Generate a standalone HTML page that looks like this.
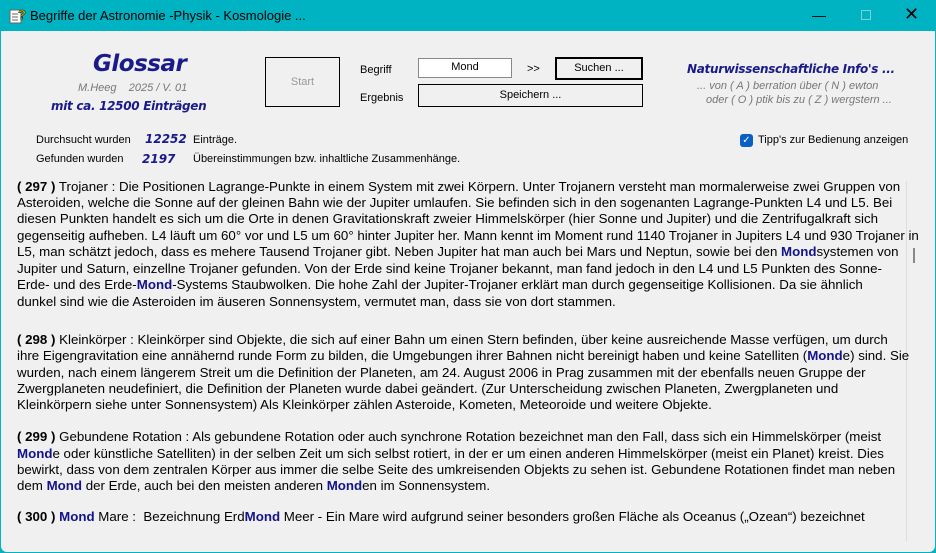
<!DOCTYPE html>
<html><head><meta charset="utf-8"><style>
*{margin:0;padding:0;box-sizing:border-box}
body{width:936px;height:553px;overflow:hidden;background:#00b3c3;font-family:"Liberation Sans",Arial,sans-serif;position:relative}
.win{position:absolute;left:1px;top:31px;width:934px;height:521px;background:#f0f0f0;border-radius:0 0 6px 6px}
.a{position:absolute;white-space:nowrap}
.title{position:absolute;left:30px;top:8px;font-size:13px;color:#000}
.s{font-size:11px;color:#000}
.box{position:absolute;border:1px solid #000}
.t{position:absolute;left:16px;font-size:13.3px;color:#000;white-space:nowrap}
.t b{font-weight:bold}
.m{color:#13138a;font-weight:bold}
.sc{font-family:"DejaVu Sans",sans-serif;font-style:italic;color:#1a1a8a}
</style></head><body>
<svg style="position:absolute;left:9px;top:7px" width="17" height="17" viewBox="0 0 17 17"><rect x="1" y="3" width="11" height="13" fill="#fff" stroke="#666"/><line x1="3" y1="7" x2="9" y2="7" stroke="#666"/><line x1="3" y1="10" x2="9" y2="10" stroke="#666"/><line x1="3" y1="13" x2="9" y2="13" stroke="#666"/><text x="9" y="12" font-size="13" font-weight="bold" fill="#e8c000" stroke="#000" stroke-width=".5" font-family="Liberation Sans">?</text></svg>
<div class="title">Begriffe der Astronomie -Physik - Kosmologie ...</div>
<div class="a" style="left:812px;top:7px;font-size:14px;color:#000">—</div>
<div style="position:absolute;left:861px;top:10px;width:10px;height:10px;border:1px solid #7fcfd8"></div>
<div class="a" style="left:904px;top:4px;font-size:18px;color:#000">✕</div>
<div class="win">
<div class="a sc" style="left:92px;top:20px;font-size:23px;font-weight:bold;letter-spacing:-0.5px">Glossar</div>
<div class="a" style="left:77px;top:51px;font-size:11px;color:#777;font-style:italic">M.Heeg &nbsp;&nbsp; 2025 / V. 01</div>
<div class="a sc" style="left:50px;top:68px;font-size:12px;font-weight:bold;letter-spacing:-0.3px">mit ca. 12500 Einträgen</div>
<div class="a s" style="left:35px;top:103px">Durchsucht wurden</div>
<div class="a sc" style="left:144px;top:101px;font-size:12px;font-weight:bold">12252</div>
<div class="a s" style="left:192px;top:103px">Einträge.</div>
<div class="a s" style="left:35px;top:122px">Gefunden wurden</div>
<div class="a sc" style="left:141px;top:121px;font-size:12px;font-weight:bold">2197</div>
<div class="a s" style="left:192px;top:122px">Übereinstimmungen bzw. inhaltliche Zusammenhänge.</div>
<div class="box" style="left:264px;top:26px;width:75px;height:50px;text-align:center;line-height:48px;font-size:11px;color:#999">Start</div>
<div class="a s" style="left:359px;top:33px">Begriff</div>
<div class="a s" style="left:359px;top:61px">Ergebnis</div>
<div class="box" style="left:417px;top:27px;width:94px;height:20px;background:#fff;border-color:#888;text-align:center;font-size:11px;line-height:16px">Mond</div>
<div class="a s" style="left:526px;top:32px">&gt;&gt;</div>
<div class="box" style="left:554px;top:26px;width:88px;height:23px;border-width:2px;text-align:center;font-size:11px;line-height:19px">Suchen ...</div>
<div class="box" style="left:417px;top:53px;width:225px;height:23px;text-align:center;font-size:11px;line-height:21px">Speichern ...</div>
<div class="a sc" style="left:686px;top:31px;font-size:12px;font-weight:bold;letter-spacing:-0.3px">Naturwissenschaftliche Info's ...</div>
<div class="a" style="left:696px;top:49px;font-size:11px;color:#777;font-style:italic">... von ( A ) berration über ( N ) ewton</div>
<div class="a" style="left:705px;top:63px;font-size:11px;color:#777;font-style:italic">oder ( O ) ptik bis zu ( Z ) wergstern ...</div>
<div style="position:absolute;left:739px;top:103px;width:13px;height:13px;background:#0a5fc4;border-radius:3px;color:#fff;font-size:10px;line-height:13px;text-align:center">✓</div>
<div class="a s" style="left:757px;top:103px">Tipp's zur Bedienung anzeigen</div>
<div style="position:absolute;left:905px;top:150px;width:1px;height:360px;background:#ddd"></div>
<div style="position:absolute;left:912px;top:217px;width:2px;height:15px;background:#888"></div>
<div class="t" style="top:148px"><b>( 297 )</b> Trojaner : Die Positionen Lagrange-Punkte in einem System mit zwei Körpern. Unter Trojanern versteht man mormalerweise zwei Gruppen von</div>
<div class="t" style="top:164px">Asteroiden, welche die Sonne auf der gleinen Bahn wie der Jupiter umlaufen. Sie befinden sich in den sogenanten Lagrange-Punkten L4 und L5. Bei</div>
<div class="t" style="top:180px">diesen Punkten handelt es sich um die Orte in denen Gravitationskraft zweier Himmelskörper (hier Sonne und Jupiter) und die Zentrifugalkraft sich</div>
<div class="t" style="top:197px">gegenseitig aufheben. L4 läuft um 60° vor und L5 um 60° hinter Jupiter her. Mann kennt im Moment rund 1140 Trojaner in Jupiters L4 und 930 Trojaner in</div>
<div class="t" style="top:213px">L5, man schätzt jedoch, dass es mehere Tausend Trojaner gibt. Neben Jupiter hat man auch bei Mars und Neptun, sowie bei den <span class="m">Mond</span>systemen von</div>
<div class="t" style="top:230px">Jupiter und Saturn, einzellne Trojaner gefunden. Von der Erde sind keine Trojaner bekannt, man fand jedoch in den L4 und L5 Punkten des Sonne-</div>
<div class="t" style="top:246px">Erde- und des Erde-<span class="m">Mond</span>-Systems Staubwolken. Die hohe Zahl der Jupiter-Trojaner erklärt man durch gegenseitige Kollisionen. Da sie ähnlich</div>
<div class="t" style="top:263px">dunkel sind wie die Asteroiden im äuseren Sonnensystem, vermutet man, dass sie von dort stammen.</div>
<div class="t" style="top:301px"><b>( 298 )</b> Kleinkörper : Kleinkörper sind Objekte, die sich auf einer Bahn um einen Stern befinden, über keine ausreichende Masse verfügen, um durch</div>
<div class="t" style="top:317px">ihre Eigengravitation eine annähernd runde Form zu bilden, die Umgebungen ihrer Bahnen nicht bereinigt haben und keine Satelliten (<span class="m">Mond</span>e) sind. Sie</div>
<div class="t" style="top:334px">wurden, nach einem längerem Streit um die Definition der Planeten, am 24. August 2006 in Prag zusammen mit der ebenfalls neuen Gruppe der</div>
<div class="t" style="top:350px">Zwergplaneten neudefiniert, die Definition der Planeten wurde dabei geändert. (Zur Unterscheidung zwischen Planeten, Zwergplaneten und</div>
<div class="t" style="top:366px">Kleinkörpern siehe unter Sonnensystem) Als Kleinkörper zählen Asteroide, Kometen, Meteoroide und weitere Objekte.</div>
<div class="t" style="top:398px"><b>( 299 )</b> Gebundene Rotation : Als gebundene Rotation oder auch synchrone Rotation bezeichnet man den Fall, dass sich ein Himmelskörper (meist</div>
<div class="t" style="top:415px"><span class="m">Mond</span>e oder künstliche Satelliten) in der selben Zeit um sich selbst rotiert, in der er um einen anderen Himmelskörper (meist ein Planet) kreist. Dies</div>
<div class="t" style="top:431px">bewirkt, dass von dem zentralen Körper aus immer die selbe Seite des umkreisenden Objekts zu sehen ist. Gebundene Rotationen findet man neben</div>
<div class="t" style="top:447px">dem <span class="m">Mond</span> der Erde, auch bei den meisten anderen <span class="m">Mond</span>en im Sonnensystem.</div>
<div class="t" style="top:478px"><b>( 300 )</b> <span class="m">Mond</span> Mare : &nbsp;Bezeichnung Erd<span class="m">Mond</span> Meer - Ein Mare wird aufgrund seiner besonders großen Fläche als Oceanus („Ozean“) bezeichnet</div>
</div>
</body></html>
